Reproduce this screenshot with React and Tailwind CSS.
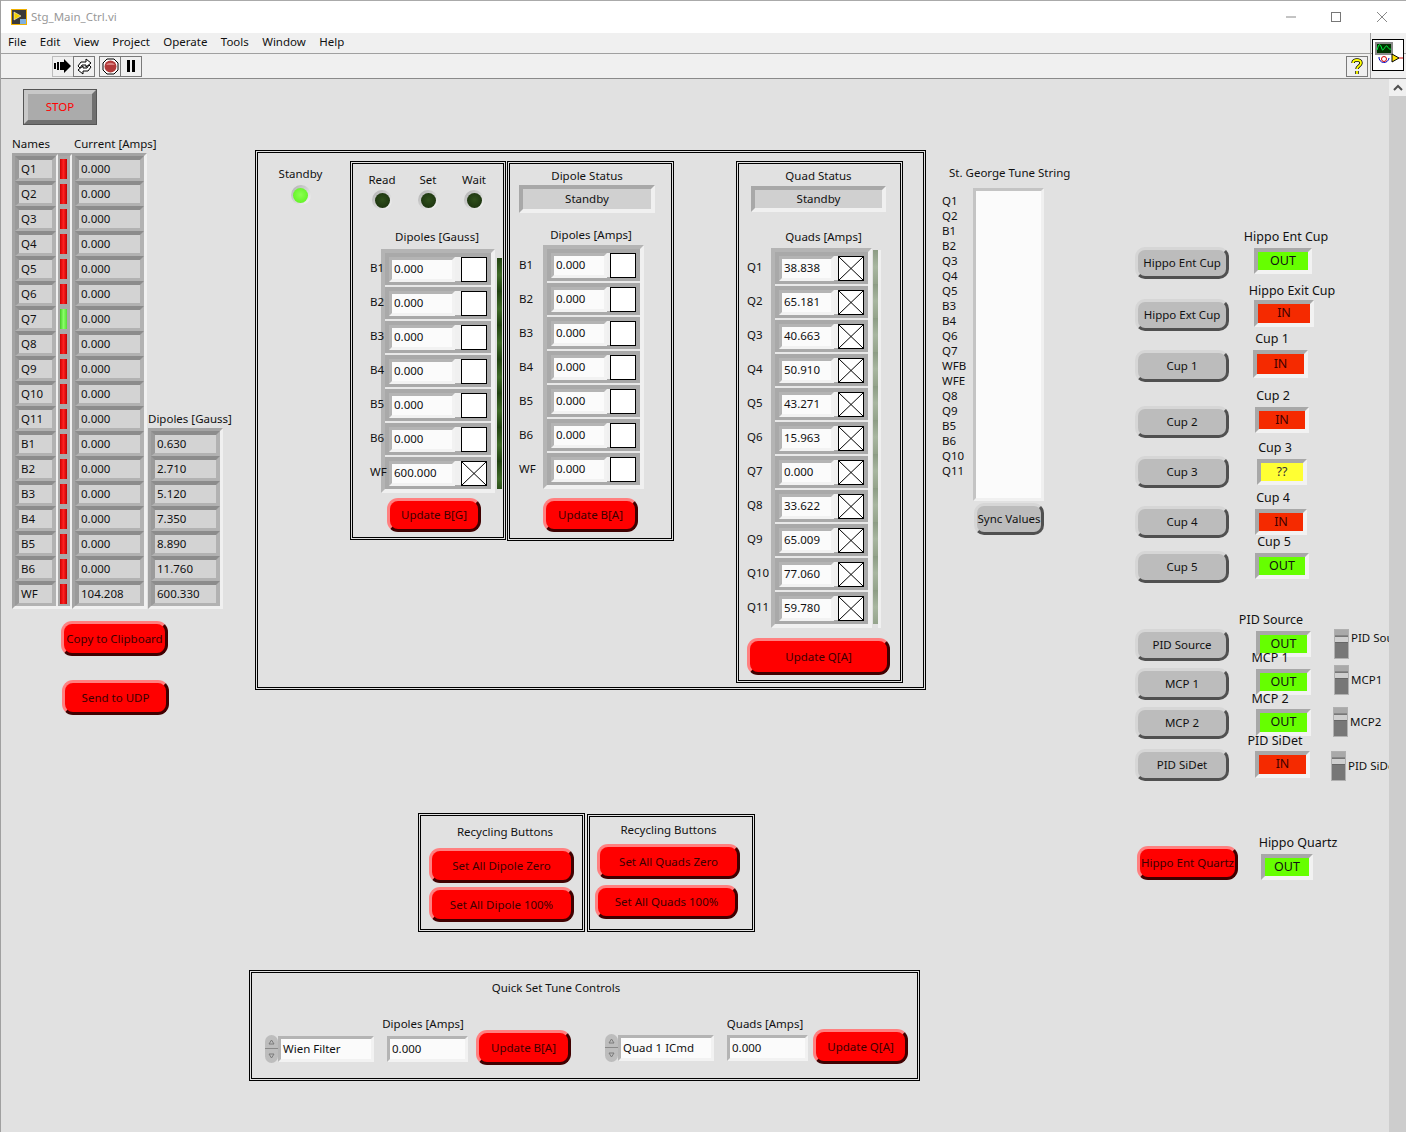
import React from "react";

const Red = ({ className = "", children }) => (
  <div className={`flex items-center justify-center rounded-[11px] bg-[#ff0000] border-[3px] border-t-[#ff8080] border-l-[#ff8080] border-r-[#400000] border-b-[#400000] text-[#3c0000] whitespace-nowrap ${className}`}>{children}</div>
);
const Gray = ({ className = "", children }) => (
  <div className={`flex items-center justify-center rounded-[10px] bg-[#bcbcbc] border-[3px] border-t-[#d6d6d6] border-l-[#d6d6d6] border-r-[#505050] border-b-[#505050] text-[#111] whitespace-nowrap ${className}`}>{children}</div>
);
const Ind = ({ className = "", on, children }) => (
  <div className={`flex items-center justify-center border-[4px] border-t-[#a8a8a8] border-l-[#a8a8a8] border-r-[#f2f2f2] border-b-[#f2f2f2] whitespace-nowrap text-[12.5px] ${on === "y" ? "bg-[#ffff33] text-[#333]" : on ? "bg-[#66ff00] text-[#111]" : "bg-[#f52a00] text-[#400000]"} ${className}`}>{children}</div>
);
const Num = ({ className = "", children }) => (
  <div className={`flex items-center border-[3px] border-t-[#b4b4b4] border-l-[#b4b4b4] border-r-[#f2f2f2] border-b-[#f2f2f2] bg-[#fbfbfb] pl-[2px] text-[#111] ${className}`}>{children}</div>
);
const Led = ({ on }) => (
  <div className="flex items-center justify-center w-[20px] h-[20px] rounded-full bg-gradient-to-br from-[#b0b0b0] to-[#f8f8f8]">
    <div className={`w-[15px] h-[15px] rounded-full ${on ? "bg-[radial-gradient(circle_at_50%_45%,#8cff50,#55f018)]" : "bg-[radial-gradient(circle_at_50%_45%,#30501c,#172c0c)]"}`} />
  </div>
);
const Lab = ({ className = "", children }) => (
  <div className={`h-[12px] flex items-center whitespace-nowrap leading-none ${className}`}>{children}</div>
);
const XBox = ({ checked }) => (
  <div className="w-[26px] h-[25px] shrink-0 border border-black bg-white">
    {checked && (
      <svg viewBox="0 0 24 23" className="w-full h-full block" preserveAspectRatio="none">
        <path d="M0 0L24 23M24 0L0 23" stroke="#000" strokeWidth="1" fill="none" />
      </svg>
    )}
  </div>
);
const Toggle = () => (
  <div className="w-[15px] h-[30px] shrink-0 border border-[#b0b0b0] bg-[#777]">
    <div className="h-[6px] bg-[#a9a9a9] border-b border-[#888]" />
    <div className="h-[6px] mt-px bg-[#cfcfcf] border-b border-[#666]" />
  </div>
);

function ArrayRows({ className = "", rows, numW }) {
  return (
    <div className={`shrink-0 flex flex-col gap-[2px] border-[4px] border-t-[#b4b4b4] border-l-[#b4b4b4] border-r-[#f0f0f0] border-b-[#f0f0f0] bg-[#e8e8e8] ${className}`}>
      {rows.map(([v, c], i) => (
        <div key={i} className="h-[32px] flex items-center justify-between border-[4px] border-[#a9a9a9] bg-[#f0f0f0]">
          <Num className={`h-[25px] ${numW}`}>{v}</Num>
          <XBox checked={c} />
        </div>
      ))}
    </div>
  );
}

function RowLabels({ className = "", items }) {
  return (
    <div className={`relative z-10 flex flex-col ${className}`}>
      {items.map((t) => (
        <div key={t} className="h-[34px] flex items-center leading-none whitespace-nowrap">{t}</div>
      ))}
    </div>
  );
}

const cellBevel = "border-x-[4px] border-t-[4px] border-b-[3px] border-t-[#8c8c8c] border-l-[#9a9a9a] border-r-[#b2b2b2] border-b-[#b2b2b2]";
const colFrame = "flex flex-col border-[3px] border-t-[#a4a4a4] border-l-[#a4a4a4] border-r-[#f0f0f0] border-b-[#f0f0f0]";

function Col({ className = "", items }) {
  return (
    <div className={`${colFrame} ${className}`}>
      {items.map((t, i) => (
        <div key={i} className={`h-[25px] flex items-center pl-[2px] bg-[#d3d3d3] text-[#111] ${cellBevel}`}>{t}</div>
      ))}
    </div>
  );
}

function Strip({ className = "", n, faded }) {
  return (
    <div className={`flex flex-col shrink-0 overflow-hidden ${className}`}>
      {Array.from({ length: n }).map((_, i) => (
        <div key={i} className={`h-[34px] shrink-0 bg-gradient-to-b ${faded ? "from-[#8c9c84] via-[#a8b6a0] to-[#94a38b]" : "from-[#234412] via-[#3f6a28] to-[#1f3f10]"}`} />
      ))}
    </div>
  );
}

const Ring = ({ className = "", label }) => (
  <div className={`flex items-center h-[28px] ${className}`}>
    <div className="w-[13px] h-[28px] flex flex-col">
      <div className="h-[14px] rounded-t-full bg-[#bdbdbd] border-b border-[#8a8a8a] flex items-center justify-center">
        <svg width="7" height="6" viewBox="0 0 7 6"><path d="M3.5 1L6 5H1Z" fill="none" stroke="#7a7a7a" /></svg>
      </div>
      <div className="h-[14px] rounded-b-full bg-[#bdbdbd] flex items-center justify-center">
        <svg width="7" height="6" viewBox="0 0 7 6"><path d="M3.5 5L6 1H1Z" fill="none" stroke="#7a7a7a" /></svg>
      </div>
    </div>
    <Num className="w-[96px] h-[26px]">{label}</Num>
  </div>
);

const StatusBox = ({ className = "", children }) => (
  <div className={`flex items-center justify-center bg-[#d0d0d0] border-[4px] border-t-[#a8a8a8] border-l-[#a8a8a8] border-r-[#f0f0f0] border-b-[#f0f0f0] ${className}`}>{children}</div>
);

/* a labelled status indicator of the right column */
const LabeledInd = ({ className = "", label, labelClass, indClass, on, children }) => (
  <div className={`flex flex-col items-start ${className}`}>
    <div className={`h-[22px] w-[80px] flex items-center justify-center whitespace-nowrap text-[12.5px] leading-none ${labelClass}`}>{label}</div>
    <Ind className={indClass} on={on}>{children}</Ind>
  </div>
);

const dFrame = "border-[3px] border-double border-black";

const names = ["Q1","Q2","Q3","Q4","Q5","Q6","Q7","Q8","Q9","Q10","Q11","B1","B2","B3","B4","B5","B6","WF"];
const currents = names.map((n) => (n === "WF" ? "104.208" : "0.000"));
const dipoleVals = ["0.630","2.710","5.120","7.350","8.890","11.760","600.330"];
const gaussRows = [["0.000"],["0.000"],["0.000"],["0.000"],["0.000"],["0.000"],["600.000",true]];
const ampRows = [["0.000"],["0.000"],["0.000"],["0.000"],["0.000"],["0.000"],["0.000"]];
const quadRows = ["38.838","65.181","40.663","50.910","43.271","15.963","0.000","33.622","65.009","77.060","59.780"].map((v) => [v, true]);
const tuneLines = ["Q1","Q2","B1","B2","Q3","Q4","Q5","B3","B4","Q6","Q7","WFB","WFE","Q8","Q9","B5","B6","Q10","Q11"];
const bLabels = ["B1","B2","B3","B4","B5","B6","WF"];
const qLabels = ["Q1","Q2","Q3","Q4","Q5","Q6","Q7","Q8","Q9","Q10","Q11"];

function Header() {
  return (
    <div className="h-[79px]">
      <div className="h-[33px] bg-white relative flex items-center pl-[11px] gap-[4px] text-[#999] border-t border-[#aaa]">
        <svg width="16" height="16" viewBox="0 0 16 16" className="shrink-0">
          <rect x="0.5" y="0.5" width="15" height="15" fill="#3a3a3a" stroke="#f0b000" />
          <path d="M3 3L10 7L3 11Z" fill="#f4d000" stroke="#fff" strokeWidth="0.5" />
          <rect x="9" y="10" width="6" height="5" fill="#7fb0e0" />
        </svg>
        <span>Stg_Main_Ctrl.vi</span>
        <svg width="120" height="32" viewBox="0 0 120 32" className="absolute right-[1px] top-0">
          <path d="M1 16H11" stroke="#888" />
          <rect x="46.5" y="11.5" width="9" height="9" fill="none" stroke="#777" />
          <path d="M92 11L102 21M102 11L92 21" stroke="#888" />
        </svg>
      </div>
      <div className="h-[21px] pb-[2px] bg-[#f0f0f0] border-b border-[#a0a0a0] flex items-center pl-[8px] gap-[13.4px] text-[#111]">
        {["File","Edit","View","Project","Operate","Tools","Window","Help"].map((m) => <span key={m}>{m}</span>)}
      </div>
      <div className="h-[25px] bg-[#f0f0f0] border-b border-[#8a8a8a] flex items-center">
        <div className="ml-[52px] flex">
          <div className="w-[22px] h-[21px] border border-[#bdbdbd] flex items-center justify-center">
            <svg width="18" height="14" viewBox="0 0 18 14"><path d="M0 4H2V10H0ZM3 3H5V11H3ZM6 3H10V0L17 7L10 14V11H6Z" fill="#000" /></svg>
          </div>
          <div className="w-[22px] h-[21px] -ml-px border border-[#7a7a7a] flex items-center justify-center">
            <svg width="17" height="17" viewBox="0 0 17 17" fill="#fff" stroke="#000"><path d="M2 8L5 4H10V1L15 5L10 9V7H6L4 10Z" /><path d="M15 9L12 13H7V16L2 12L7 8V10H11L13 7Z" /></svg>
          </div>
        </div>
        <div className="ml-[4px] flex">
          <div className="w-[22px] h-[21px] border border-[#7a7a7a] flex items-center justify-center">
            <svg width="17" height="17" viewBox="0 0 17 17"><path d="M5 1H12L16 5V12L12 16H5L1 12V5Z" fill="#fff" stroke="#000" /><circle cx="8.5" cy="8.5" r="6" fill="#b23a3a" /><path d="M4 7A5 4 0 0 1 13 7Z" fill="#d98080" /></svg>
          </div>
          <div className="w-[22px] h-[21px] -ml-px border border-[#7a7a7a] flex items-center justify-center">
            <svg width="10" height="12" viewBox="0 0 10 12"><path d="M1 0H4V12H1ZM6 0H9V12H6Z" fill="#000" /></svg>
          </div>
        </div>
        <div className="ml-[1204px] w-[22px] h-[21px] border border-[#7a7a7a] flex items-center justify-center">
          <svg width="14" height="18" viewBox="0 0 14 18"><path d="M3 6C3 2 11 2 11 6C11 9 7 9 7 12M7 14V17" fill="none" stroke="#000" strokeWidth="3.4" /><path d="M3 6C3 2 11 2 11 6C11 9 7 9 7 12M7 14V17" fill="none" stroke="#ffff00" strokeWidth="1.8" /></svg>
        </div>
      </div>
    </div>
  );
}

function LeftGroup() {
  return (
    <div className="absolute left-[12px] top-[89px] flex flex-col items-start">
      <div className="ml-[11px] w-[74px] h-[36px] border border-[#555]">
        <div className="w-full h-full flex items-center justify-center bg-[#ababab] border-[4px] border-t-[#c8c8c8] border-l-[#c8c8c8] border-r-[#707070] border-b-[#707070] text-[#ff0000]">STOP</div>
      </div>
      <div className="mt-[13px] flex">
        <Lab className="w-[62px]">Names</Lab>
        <Lab>Current [Amps]</Lab>
      </div>
      <div className="mt-[3px] flex items-end">
        <Col className="w-[47px]" items={names} />
        <div className="-ml-px w-[15px] flex flex-col border-y-[3px] border-r-[3px] border-t-[#a4a4a4] border-r-[#f0f0f0] border-b-[#f0f0f0]">
          {names.map((n) => (
            <div key={n} className="h-[25px] flex items-center pl-[2px] bg-[#a9a9a9]">
              <div className={`w-[7px] h-[20px] bg-gradient-to-r ${n === "Q7" ? "from-[#44cc22] via-[#88ff66] to-[#55dd33]" : "from-[#d00000] via-[#ff2020] to-[#c00000]"}`} />
            </div>
          ))}
        </div>
        <Col className="-ml-px w-[75px]" items={currents} />
        <div className="ml-px flex flex-col items-start">
          <Lab>Dipoles [Gauss]</Lab>
          <Col className="mt-[3px] w-[75px]" items={dipoleVals} />
        </div>
      </div>
      <Red className="ml-[49px] mt-[12px] w-[107px] h-[35px]">Copy to Clipboard</Red>
      <Red className="ml-[50px] mt-[24px] w-[107px] h-[35px]">Send to UDP</Red>
    </div>
  );
}

function MainFrame() {
  return (
    <div className={`absolute left-[255px] top-[150px] w-[671px] h-[540px] pt-[8px] flex items-start ${dFrame}`}>
      <div className="w-[85px] mr-[7px] mt-[7px] flex flex-col items-center gap-[5px]">
        <Lab>Standby</Lab>
        <Led on />
      </div>

      {/* Dipoles [Gauss] */}
      <div className={`w-[156px] h-[379px] flex flex-col items-start ${dFrame}`}>
        <div className="mt-[10px] ml-[6px] flex">
          {["Read","Set","Wait"].map((t) => (
            <div key={t} className="w-[46px] flex flex-col items-center gap-[4px]">
              <Lab>{t}</Lab>
              <Led />
            </div>
          ))}
        </div>
        <Lab className="mt-[21px] w-full justify-center pl-[18px]">Dipoles [Gauss]</Lab>
        <div className="mt-[6px] ml-[17px] flex items-start">
          <RowLabels className="w-[11px] pt-[2px]" items={bLabels} />
          <ArrayRows className="w-[114px]" rows={gaussRows} numW="w-[66px]" />
          <Strip className="ml-[2px] mt-[9px] w-[5px] h-[231px]" n={7} />
        </div>
        <Red className="mt-[5px] ml-[34px] w-[94px] h-[34px]">Update B[G]</Red>
      </div>

      {/* Dipole Status */}
      <div className={`ml-px w-[167px] h-[380px] flex flex-col items-start ${dFrame}`}>
        <Lab className="mt-[6px] ml-[9px] w-[136px] justify-center">Dipole Status</Lab>
        <StatusBox className="mt-[3px] ml-[9px] w-[136px] h-[28px]">Standby</StatusBox>
        <Lab className="mt-[16px] ml-[9px] w-[136px] justify-center pl-[8px]">Dipoles [Amps]</Lab>
        <div className="mt-[4px] ml-[9px] flex items-start">
          <RowLabels className="w-[24px] pt-[3px]" items={bLabels} />
          <ArrayRows className="w-[101px]" rows={ampRows} numW="w-[56px]" />
        </div>
        <Red className="mt-[9px] ml-[33px] w-[95px] h-[34px]">Update B[A]</Red>
      </div>

      {/* Quad Status */}
      <div className={`ml-[62px] w-[167px] h-[522px] flex flex-col items-start ${dFrame}`}>
        <Lab className="mt-[6px] ml-[12px] w-[135px] justify-center">Quad Status</Lab>
        <StatusBox className="mt-[4px] ml-[12px] w-[135px] h-[26px]">Standby</StatusBox>
        <Lab className="mt-[19px] ml-[12px] w-[135px] justify-center pl-[10px]">Quads [Amps]</Lab>
        <div className="mt-[5px] ml-[8px] flex items-start">
          <RowLabels className="w-[24px] pt-[2px]" items={qLabels} />
          <ArrayRows className="w-[101px]" rows={quadRows} numW="w-[55px]" />
          <Strip className="ml-px mt-[2px] w-[5px] h-[375px]" n={11} faded />
          <div className="mt-[2px] w-[3px] h-[378px] bg-[#f0f0f0]" />
        </div>
        <Red className="mt-[10px] ml-[8px] w-[143px] h-[37px]">Update Q[A]</Red>
      </div>
    </div>
  );
}

function TuneGroup() {
  return (
    <div className="absolute left-[942px] top-[165px] flex flex-col items-start">
      <div className="ml-[7px] h-[16px] flex items-center whitespace-nowrap leading-none">St. George Tune String</div>
      <div className="mt-[7px] flex items-start">
        <div className="w-[31px] pt-[5.5px] flex flex-col">
          {tuneLines.map((t) => <div key={t} className="h-[15px] flex items-center leading-none">{t}</div>)}
        </div>
        <div className="w-[71px] h-[313px] bg-[#fbfbfb] border-[3px] border-t-[#c4c4c4] border-l-[#c4c4c4] border-r-[#f0f0f0] border-b-[#f0f0f0]" />
      </div>
      <Gray className="mt-[2px] ml-[32px] w-[70px] h-[32px]">Sync Values</Gray>
    </div>
  );
}

function RightGroup() {
  return (
    <div className="absolute left-[1135px] top-[226px] flex items-start">
      <div className="w-[95px] pt-[21px] flex flex-col items-start">
        <Gray className="w-[94px] h-[32px]">Hippo Ent Cup</Gray>
        <Gray className="mt-[20px] w-[94px] h-[32px]">Hippo Ext Cup</Gray>
        <Gray className="mt-[19px] w-[94px] h-[32px]">Cup 1</Gray>
        <Gray className="mt-[24px] w-[94px] h-[32px]">Cup 2</Gray>
        <Gray className="mt-[18px] w-[94px] h-[32px]">Cup 3</Gray>
        <Gray className="mt-[18px] w-[94px] h-[32px]">Cup 4</Gray>
        <Gray className="mt-[13px] w-[94px] h-[32px]">Cup 5</Gray>
        <Gray className="mt-[46px] w-[94px] h-[32px]">PID Source</Gray>
        <Gray className="mt-[7px] w-[94px] h-[32px]">MCP 1</Gray>
        <Gray className="mt-[7px] w-[94px] h-[32px]">MCP 2</Gray>
        <Gray className="mt-[10px] w-[94px] h-[32px]">PID SiDet</Gray>
      </div>
      <div className="flex flex-col items-start">
        <LabeledInd label="Hippo Ent Cup" labelClass="ml-[16px]" indClass="ml-[24px] w-[58px] h-[26px]" on>OUT</LabeledInd>
        <LabeledInd className="mt-[4px]" label="Hippo Exit Cup" labelClass="ml-[22px] pt-[4px]" indClass="ml-[24px] w-[60px] h-[27px]">IN</LabeledInd>
        <LabeledInd className="mt-[1px]" label="Cup 1" labelClass="ml-[2px]" indClass="ml-[23px] w-[55px] h-[28px]">IN</LabeledInd>
        <LabeledInd className="mt-[7px]" label="Cup 2" labelClass="ml-[3px]" indClass="ml-[25px] w-[54px] h-[26px]">IN</LabeledInd>
        <LabeledInd className="mt-[4px]" label="Cup 3" labelClass="ml-[5px]" indClass="ml-[27px] w-[50px] h-[26px]" on="y">??</LabeledInd>
        <LabeledInd className="mt-[2px]" label="Cup 4" labelClass="ml-[3px]" indClass="ml-[25px] w-[52px] h-[26px]">IN</LabeledInd>
        <LabeledInd className="-mt-[4px]" label="Cup 5" labelClass="ml-[4px]" indClass="ml-[25px] w-[54px] h-[26px]" on>OUT</LabeledInd>
        <LabeledInd className="mt-[30px]" label="PID Source" labelClass="ml-[1px]" indClass="ml-[26px] w-[55px] h-[26px]" on>OUT</LabeledInd>
        <LabeledInd className="-mt-[10px]" label="MCP 1" indClass="ml-[26px] w-[55px] h-[26px]" on>OUT</LabeledInd>
        <LabeledInd className="-mt-[8px]" label="MCP 2" labelClass="pt-[2px]" indClass="ml-[26px] w-[55px] h-[27px]" on>OUT</LabeledInd>
        <LabeledInd className="-mt-[7px]" label="PID SiDet" labelClass="ml-[5px] pt-[2px]" indClass="ml-[25px] w-[55px] h-[27px]">IN</LabeledInd>
      </div>
    </div>
  );
}

function Toggles() {
  return (
    <div className="absolute left-[1331px] top-[629px] flex flex-col items-start">
      <div className="ml-[3px] flex items-start gap-[2px]"><Toggle /><Lab className="mt-[3px]">PID Source</Lab></div>
      <div className="ml-[3px] mt-[6px] flex items-center gap-[2px]"><Toggle /><Lab>MCP1</Lab></div>
      <div className="ml-[2px] mt-[12px] flex items-center gap-[2px]"><Toggle /><Lab>MCP2</Lab></div>
      <div className="mt-[14px] flex items-center gap-[2px]"><Toggle /><Lab>PID SiDet</Lab></div>
    </div>
  );
}

function QuartzGroup() {
  return (
    <div className="absolute left-[1137px] top-[832px] flex items-start">
      <Red className="mt-[14px] w-[101px] h-[34px]">Hippo Ent Quartz</Red>
      <LabeledInd label="Hippo Quartz" labelClass="ml-[20px]" indClass="ml-[23px] w-[52px] h-[26px]" on>OUT</LabeledInd>
    </div>
  );
}

function Recycling() {
  return (
    <div className="absolute left-[418px] top-[813px] flex items-start gap-[2px]">
      <div className={`w-[167px] h-[119px] flex flex-col items-start ${dFrame}`}>
        <Lab className="mt-[10px] ml-[8px] w-[145px] justify-center pl-[7px]">Recycling Buttons</Lab>
        <Red className="mt-[10px] ml-[8px] w-[145px] h-[35px]">Set All Dipole Zero</Red>
        <Red className="mt-[4px] ml-[8px] w-[145px] h-[35px]">Set All Dipole 100%</Red>
      </div>
      <div className={`mt-px w-[168px] h-[118px] flex flex-col items-start ${dFrame}`}>
        <Lab className="mt-[7px] ml-[7px] w-[143px] justify-center">Recycling Buttons</Lab>
        <Red className="mt-[8px] ml-[7px] w-[143px] h-[35px]">Set All Quads Zero</Red>
        <Red className="mt-[6px] ml-[5px] w-[143px] h-[34px]">Set All Quads 100%</Red>
      </div>
    </div>
  );
}

function QuickSet() {
  return (
    <div className={`absolute left-[249px] top-[970px] w-[671px] h-[111px] flex flex-col ${dFrame}`}>
      <Lab className="mt-[9px] justify-center pr-[57px]">Quick Set Tune Controls</Lab>
      <div className="mt-[24px] ml-[13px] flex items-start">
        <Ring className="mt-[17px]" label="Wien Filter" />
        <div className="ml-[13px] w-[81px] flex flex-col">
          <Lab className="justify-center pr-[9px]">Dipoles [Amps]</Lab>
          <Num className="mt-[6px] h-[26px]">0.000</Num>
        </div>
        <Red className="ml-[8px] mt-[12px] w-[95px] h-[35px]">Update B[A]</Red>
        <Ring className="ml-[34px] mt-[16px]" label="Quad 1 ICmd" />
        <div className="ml-[13px] w-[81px] flex flex-col">
          <Lab className="justify-center pr-[5px]">Quads [Amps]</Lab>
          <Num className="mt-[5px] h-[26px]">0.000</Num>
        </div>
        <Red className="ml-[5px] mt-[11px] w-[95px] h-[35px]">Update Q[A]</Red>
      </div>
    </div>
  );
}

export default function App() {
  return (
    <div className="relative w-[1406px] h-[1132px] overflow-hidden bg-[#e1e1e1] text-[11.5px] text-[#111] font-['Noto_Sans',sans-serif]">
      <Header />
      <div className="absolute left-0 top-0 bottom-0 w-px bg-[#a0a0a0]" />

      {/* VI icon */}
      <div className="absolute left-[1370px] top-[33px] w-px h-[45px] bg-[#a0a0a0]" />
      <div className="absolute left-[1372px] top-[39px] w-[32px] h-[32px] border border-black bg-white">
        <svg viewBox="0 0 30 30" className="w-full h-full block">
          <rect x="2" y="2" width="18" height="13" fill="#8a8a8a" />
          <rect x="4" y="4" width="14" height="9" fill="#003300" />
          <path d="M4 10C6 3 7 3 9 9C10 13 12 5 14 6C15 7 16 10 18 9" stroke="#00ff44" fill="none" />
          <path d="M6 17A5 5 0 0 0 16 18" stroke="#0000c0" fill="none" />
          <circle cx="11" cy="19" r="2.5" stroke="#d00000" fill="none" />
          <path d="M19 14L26 18L19 22Z" fill="#ffe000" stroke="#000" />
          <path d="M26 18H30" stroke="#d00000" />
        </svg>
      </div>

      {/* Scrollbar lies over the panel and clips the labels that run into it */}
      <div className="absolute right-0 top-[79px] bottom-0 w-[17px] z-20 bg-[#cdcdcd] flex flex-col">
        <div className="h-[17px] bg-[#f0f0f0] flex items-center justify-center">
          <svg width="10" height="7" viewBox="0 0 10 7"><path d="M1 6L5 2L9 6" stroke="#505050" strokeWidth="2" fill="none" /></svg>
        </div>
      </div>

      <LeftGroup />
      <MainFrame />
      <TuneGroup />
      <RightGroup />
      <Toggles />
      <QuartzGroup />
      <Recycling />
      <QuickSet />
    </div>
  );
}
